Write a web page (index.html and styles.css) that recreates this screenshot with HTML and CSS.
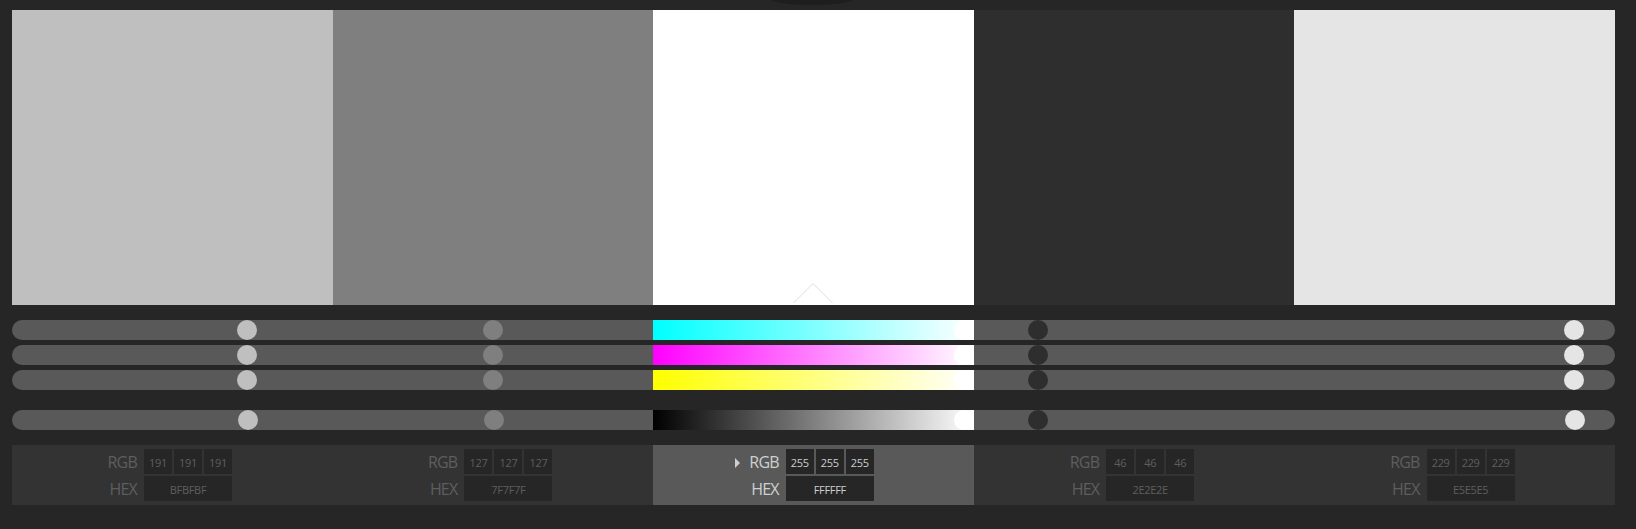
FILE: index.html
```html
<!doctype html>
<html>
<head>
<meta charset="utf-8">
<title>Color mixer</title>
<link rel="stylesheet" href="styles.css">
</head>
<body>

<div class="topNotch"></div>

<div class="mixer">

  <div class="swatches">
    <div class="swatch" style="background:#bfbfbf"></div>
    <div class="swatch" style="background:#7f7f7f"></div>
    <div class="swatch swatch-active" style="background:#fff">
      <svg class="caret" width="40" height="20" viewBox="0 0 40 20"><path d="M0.5 20 L20 0.5 L39.5 20" /></svg>
    </div>
    <div class="swatch" style="background:#2e2e2e"></div>
    <div class="swatch" style="background:#e5e5e5"></div>
  </div>

  <div class="sliders">
    <div class="sliderRow">
      <div class="track"><span class="knob" style="left:225px;background:#bfbfbf"></span></div>
      <div class="track"><span class="knob" style="left:150px;background:#7f7f7f"></span></div>
      <div class="track track-c"><span class="knob" style="left:300.6px;background:#fff"></span></div>
      <div class="track"><span class="knob" style="left:54px;background:#2e2e2e"></span></div>
      <div class="track"><span class="knob" style="left:270px;background:#e5e5e5"></span></div>
    </div>
    <div class="sliderRow">
      <div class="track"><span class="knob" style="left:225px;background:#bfbfbf"></span></div>
      <div class="track"><span class="knob" style="left:150px;background:#7f7f7f"></span></div>
      <div class="track track-m"><span class="knob" style="left:300.6px;background:#fff"></span></div>
      <div class="track"><span class="knob" style="left:54px;background:#2e2e2e"></span></div>
      <div class="track"><span class="knob" style="left:270px;background:#e5e5e5"></span></div>
    </div>
    <div class="sliderRow">
      <div class="track"><span class="knob" style="left:225px;background:#bfbfbf"></span></div>
      <div class="track"><span class="knob" style="left:150px;background:#7f7f7f"></span></div>
      <div class="track track-y"><span class="knob" style="left:300.6px;background:#fff"></span></div>
      <div class="track"><span class="knob" style="left:54px;background:#2e2e2e"></span></div>
      <div class="track"><span class="knob" style="left:270px;background:#e5e5e5"></span></div>
    </div>
    <div class="sliderRow sliderRow-gray">
      <div class="track"><span class="knob" style="left:226px;background:#bfbfbf"></span></div>
      <div class="track"><span class="knob" style="left:151px;background:#7f7f7f"></span></div>
      <div class="track track-k"><span class="knob" style="left:300.6px;background:#fff"></span></div>
      <div class="track"><span class="knob" style="left:54px;background:#2e2e2e"></span></div>
      <div class="track"><span class="knob" style="left:271px;background:#e5e5e5"></span></div>
    </div>
  </div>

  <div class="values">
    <div class="value">
      <div class="line"><span class="label">RGB</span><span class="cell">191</span><span class="cell">191</span><span class="cell">191</span></div>
      <div class="line"><span class="label">HEX</span><span class="cell cell-hex">BFBFBF</span></div>
    </div>
    <div class="value">
      <div class="line"><span class="label">RGB</span><span class="cell">127</span><span class="cell">127</span><span class="cell">127</span></div>
      <div class="line"><span class="label">HEX</span><span class="cell cell-hex">7F7F7F</span></div>
    </div>
    <div class="value value-active">
      <div class="line"><i class="arrow"></i><span class="label">RGB</span><span class="cell">255</span><span class="cell">255</span><span class="cell">255</span></div>
      <div class="line"><span class="label">HEX</span><span class="cell cell-hex">FFFFFF</span></div>
    </div>
    <div class="value">
      <div class="line"><span class="label">RGB</span><span class="cell">46</span><span class="cell">46</span><span class="cell">46</span></div>
      <div class="line"><span class="label">HEX</span><span class="cell cell-hex">2E2E2E</span></div>
    </div>
    <div class="value">
      <div class="line"><span class="label">RGB</span><span class="cell">229</span><span class="cell">229</span><span class="cell">229</span></div>
      <div class="line"><span class="label">HEX</span><span class="cell cell-hex">E5E5E5</span></div>
    </div>
  </div>

</div>

</body>
</html>
```

FILE: styles.css
```css
html, body {
  margin: 0;
  height: 100%;
  overflow: hidden;
  background: #262626;
}

.topNotch {
  position: absolute;
  left: 767px;
  top: -11px;
  width: 90px;
  height: 16px;
  border-radius: 50%;
  background: #1e1e1e;
}

.mixer {
  position: relative;
  padding: 10px 21px 0 12px;
  font-family: "Open Sans", sans-serif;
}

.swatches {
  display: flex;
  height: 295px;
}

.swatch {
  flex: 1 1 0;
  position: relative;
}

.caret {
  position: absolute;
  left: 50%;
  bottom: 2px;
  margin-left: -20px;
}

.caret path {
  fill: none;
  stroke: #ddd;
  stroke-width: 1;
}

.sliders {
  margin-top: 15px;
}

.sliderRow {
  display: flex;
  height: 20px;
  margin-bottom: 5px;
}

.sliderRow-gray {
  margin-top: 20px;
  margin-bottom: 0;
}

.track {
  flex: 1 1 0;
  position: relative;
  overflow: hidden;
  background: #595959;
}

.track:first-child {
  border-radius: 10px 0 0 10px;
}

.track:last-child {
  border-radius: 0 10px 10px 0;
}

.track-c { background: linear-gradient(to right, #0ff, #fff); }
.track-m { background: linear-gradient(to right, #f0f, #fff); }
.track-y { background: linear-gradient(to right, #ff0, #fff); }
.track-k { background: linear-gradient(to right, #000, #fff); }

.knob {
  position: absolute;
  top: 0;
  width: 20px;
  height: 20px;
  border-radius: 50%;
}

.values {
  display: flex;
  margin-top: 15px;
}

.value {
  flex: 1 1 0;
  height: 60px;
  box-sizing: border-box;
  padding: 4px 0 0 132px;
  background: #333;
  color: #5e5e5e;
}

.value-active {
  padding-left: 133px;
  background: #595959;
  color: #cfcfcf;
}

.line {
  display: flex;
  position: relative;
  height: 25px;
  margin-bottom: 2px;
}

.label {
  position: absolute;
  right: 100%;
  margin-right: 7px;
  font-size: 16px;
  line-height: 27px;
  letter-spacing: -0.8px;
}

.arrow {
  position: absolute;
  right: 100%;
  margin-right: 46px;
  top: 9px;
  border-left: 5px solid #cfcfcf;
  border-top: 5px solid transparent;
  border-bottom: 5px solid transparent;
}

.cell {
  width: 28px;
  height: 25px;
  margin-right: 2px;
  background: #262626;
  font-size: 11px;
  line-height: 27px;
  text-align: center;
  letter-spacing: -0.3px;
}

.cell-hex {
  width: 88px;
  margin-right: 0;
}
```
